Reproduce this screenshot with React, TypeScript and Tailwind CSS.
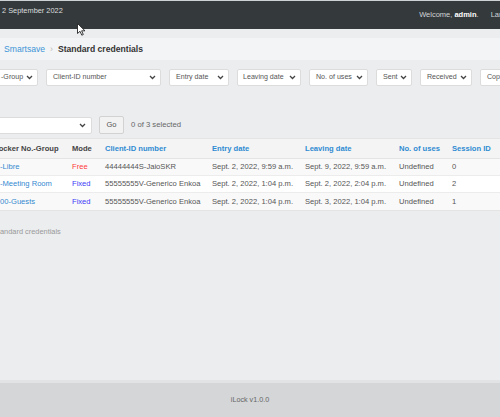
import React from "react";

const font = { fontFamily: '"Liberation Sans", Arial, sans-serif' };

function Chevron() {
  return (
    <svg width="7" height="5" viewBox="0 0 7 5" className="shrink-0">
      <path d="M1 1 L3.5 3.5 L6 1" fill="none" stroke="#444" strokeWidth="1.3" />
    </svg>
  );
}

function Sel({ label, w, extra = "" }: { label: string; w: string; extra?: string }) {
  return (
    <div
      className={`${w} ${extra} h-[17px] shrink-0 bg-white border border-[#dcdcdc] rounded-[2px] flex items-center justify-between pr-[4px] text-[7.1px] text-[#555]`}
    >
      <span className="whitespace-nowrap shrink-0">{label}</span>
      <Chevron />
    </div>
  );
}

const rows = [
  { g: "-Libre", m: "Free", mc: "text-[#ff3b3b]", c: "44444444S-JaioSKR", e: "Sept. 2, 2022, 9:59 a.m.", l: "Sept. 9, 2022, 9:59 a.m.", u: "Undefined", s: "0", bg: "bg-[#f9f9f9]" },
  { g: "-Meeting Room", m: "Fixed", mc: "text-[#3c3cf5]", c: "55555555V-Generico Enkoa", e: "Sept. 2, 2022, 1:04 p.m.", l: "Sept. 2, 2022, 2:04 p.m.", u: "Undefined", s: "2", bg: "bg-white" },
  { g: "00-Guests", m: "Fixed", mc: "text-[#3c3cf5]", c: "55555555V-Generico Enkoa", e: "Sept. 2, 2022, 1:04 p.m.", l: "Sept. 3, 2022, 1:04 p.m.", u: "Undefined", s: "1", bg: "bg-[#f9f9f9]" },
];

const cols = "grid grid-cols-[67px_33px_107px_93px_94px_53px_1fr]";

export default function App() {
  return (
    <div style={font} className="relative w-[500px] h-[417px] overflow-hidden bg-[#ebedef] flex flex-col">
      {/* header */}
      <div className="h-[29px] shrink-0 bg-[#34393c] border-t border-[#cfd2d4] flex justify-between">
        <div className="pl-[2px] pt-[4px] text-[7.4px] text-[#dcdedf] whitespace-nowrap">2 September 2022</div>
        <div className="pt-[8px] flex text-[7.5px] text-[#d0d3d5] whitespace-nowrap -mr-[24px]">
          <span>
            Welcome, <b className="text-white font-bold">admin</b>.
          </span>
          <span className="ml-[12px]">Language</span>
        </div>
      </div>

      {/* breadcrumbs */}
      <div className="mt-[9px] h-[22px] shrink-0 bg-[#f3f4f5] flex items-center pl-[4px] text-[8.6px] whitespace-nowrap">
        <span className="text-[#3d95d8]">Smartsave</span>
        <span className="mx-[5px] text-[#bbb]">›</span>
        <span className="font-bold text-[#333]">Standard credentials</span>
      </div>

      {/* filters */}
      <div className="mt-[9px] flex gap-[8px] shrink-0">
        <Sel label="-Group" w="w-[42px]" extra="-ml-[4px] pl-[4px]" />
        <Sel label="Client-ID number" w="w-[115px]" extra="pl-[6px]" />
        <Sel label="Entry date" w="w-[60px]" extra="pl-[6px]" />
        <Sel label="Leaving date" w="w-[64px]" extra="pl-[5px]" />
        <Sel label="No. of uses" w="w-[59px]" extra="pl-[6px]" />
        <Sel label="Sent" w="w-[36px]" extra="pl-[6px]" />
        <Sel label="Received" w="w-[52px]" extra="pl-[6px]" />
        <Sel label="Copy" w="w-[52px]" extra="pl-[6px]" />
      </div>

      {/* actions */}
      <div className="mt-[30px] flex items-center shrink-0">
        <div className="-ml-[4px] w-[96px] h-[17px] bg-white border border-[#dcdcdc] rounded-[2px] flex items-center justify-end pr-[5px]">
          <Chevron />
        </div>
        <div className="ml-[7px] w-[25px] h-[18px] bg-[#f2f2f2] border border-[#d2d2d2] rounded-[2px] flex items-center justify-center text-[7.5px] text-[#555]">
          Go
        </div>
        <div className="ml-[7px] text-[7.7px] text-[#666] whitespace-nowrap">0 of 3 selected</div>
      </div>

      {/* table */}
      <div className="mt-[4px] shrink-0 border-t border-b border-[#e4e4e4] text-[7.6px] whitespace-nowrap">
        <div className={`${cols} h-[20px] items-center bg-[#f4f4f4] border-b border-[#e4e4e4] font-bold`}>
          <div className="text-[#444] -ml-[6px]">Locker No.-Group</div>
          <div className="pl-[5px] text-[#444]">Mode</div>
          <div className="pl-[5px] text-[#2f8bd2]">Client-ID number</div>
          <div className="pl-[5px] text-[#2f8bd2]">Entry date</div>
          <div className="pl-[5px] text-[#2f8bd2]">Leaving date</div>
          <div className="pl-[5px] text-[#2f8bd2]">No. of uses</div>
          <div className="pl-[5px] text-[#2f8bd2]">Session ID</div>
        </div>
        {rows.map((r, i) => (
          <div key={i} className={`${cols} h-[17px] items-center ${r.bg} ${i < 2 ? "border-b border-[#ececec]" : ""} text-[#555]`}>
            <div className="text-[#3489d0]">{r.g}</div>
            <div className={`pl-[5px] ${r.mc}`}>{r.m}</div>
            <div className="pl-[5px]">{r.c}</div>
            <div className="pl-[5px]">{r.e}</div>
            <div className="pl-[5px]">{r.l}</div>
            <div className="pl-[5px]">{r.u}</div>
            <div className="pl-[5px]">{r.s}</div>
          </div>
        ))}
      </div>

      <div className="mt-[15px] text-[7.4px] text-[#999] whitespace-nowrap">andard credentials</div>

      <div className="flex-1" />

      {/* footer */}
      <div className="h-[37px] shrink-0 bg-[#d4d6d8] border-t-[3px] border-[#e1e3e5] flex items-center justify-center text-[7.2px] text-[#666]">
        iLock v1.0.0
      </div>

      {/* mouse cursor */}
      <svg className="absolute left-[77px] top-[23px]" width="9" height="13" viewBox="0 0 9 13">
        <path d="M0.5 0.5 L0.5 10.5 L3 8.3 L4.8 12.2 L6.3 11.5 L4.6 7.8 L8 7.8 Z" fill="white" stroke="#222" strokeWidth="0.9" strokeLinejoin="round" />
      </svg>
    </div>
  );
}
